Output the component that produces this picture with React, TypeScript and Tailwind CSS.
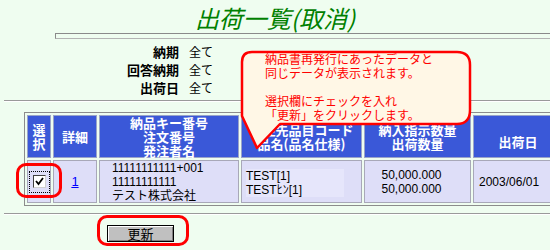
import React from 'react';

const jp = "font-['Noto_Sans_CJK_JP',sans-serif]";
const mixed = "font-['Liberation_Sans','Noto_Sans_CJK_JP',sans-serif]";

// Filtro de cabeçalho (rótulo + valor)
const filters = [
  { label: '納期', value: '全て' },
  { label: '回答納期', value: '全て' },
  { label: '出荷日', value: '全て' },
];

const headCell = `bg-[#3a58d8] border border-[#9aa4c8] text-white font-bold text-[13px] leading-[14px] flex flex-col items-center justify-center text-center ${jp}`;
const dataCell = `bg-[#dedef8] border border-[#a8a8b8] text-black text-[12px] leading-[14px] ${mixed}`;

const Callout = () => (
  <div className="absolute left-0 top-0 w-[550px] h-[250px] pointer-events-none">
    <svg width="550" height="250" viewBox="0 0 550 250" className="absolute left-0 top-0 w-[550px] h-[250px]">
      <path
        d="M252 52 H457 Q470 52 470 65 V110 Q470 124 457 124 H280 L257 148 L242 116 V62 Q242 52 252 52 Z"
        fill="#fff7e6"
        stroke="#ff0000"
        strokeWidth="2.5"
        strokeLinejoin="round"
      />
    </svg>
    <div className={`absolute left-[265px] top-[52px] text-[#ff0000] text-[12px] leading-[14px] ${jp}`}>
      <div>納品書再発行にあったデータと</div>
      <div>同じデータが表示されます。</div>
      <div>&nbsp;</div>
      <div>選択欄にチェックを入れ</div>
      <div>「更新」をクリックします。</div>
    </div>
  </div>
);

export default function App() {
  return (
    <div className="relative w-[550px] h-[250px] overflow-hidden bg-[#effdf0]">
      {/* Título */}
      <div className="h-[33px] pt-[4px] text-center">
        <span className={`text-[24px] leading-[28px] italic text-[#008000] ${jp}`}>出荷一覧(取消)</span>
      </div>
      <div className="ml-[55px] h-[6px] border-t border-l border-b border-t-[#8a8a8a] border-l-[#8a8a8a] border-b-[#b4b4b4]" />

      {/* Filtros */}
      <div className={`mt-[4px] ${jp}`}>
        {filters.map(f => (
          <div key={f.label} className="flex h-[18px] items-center">
            <span className="w-[179px] text-right font-bold text-black text-[13px]">{f.label}</span>
            <span className="ml-[10px] text-black text-[12px]">{f.value}</span>
          </div>
        ))}
      </div>
      <div className="mt-[3px] ml-[4px] h-[2px] border-t border-b border-t-[#9a9a9a] border-b-white" />

      {/* Tabela */}
      <div className="mt-[10px] ml-[24px] w-[560px] grid grid-cols-[24px_44px_140px_121px_107px_90px] grid-rows-[43px_43px] gap-[2px] p-[2px] border border-[#8c8c8c]">
        <div className={headCell}>
          <span>選</span>
          <span>択</span>
        </div>
        <div className={headCell}>詳細</div>
        <div className={headCell}>
          <span>納品キー番号</span>
          <span>注文番号</span>
          <span>発注者名</span>
        </div>
        <div className={`${headCell} text-[12px]`}>
          <span>発注先品目コード</span>
          <span>品名(品名仕様)</span>
        </div>
        <div className={headCell}>
          <span>納入指示数量</span>
          <span>出荷数量</span>
        </div>
        <div className={`${headCell} pt-[10px]`}>出荷日</div>

        <div className={`${dataCell} flex items-center justify-center`}>
          <div className="w-[21px] h-[22px] border border-dotted border-black flex items-center justify-center">
            <span className="w-[13px] h-[13px] bg-white border border-t-[#404040] border-l-[#404040] border-b-[#d0d0d0] border-r-[#d0d0d0] flex items-center justify-center">
              <svg width="9" height="9" viewBox="0 0 9 9">
                <path d="M1 4 L3.5 7 L8 1" fill="none" stroke="#000" strokeWidth="1.8" />
              </svg>
            </span>
          </div>
        </div>
        <div className={`${dataCell} flex items-center justify-center`}>
          <a href="#" className="text-[#0000ff] underline text-[13px]">1</a>
        </div>
        <div className={`${dataCell} pl-[12px] flex flex-col justify-center`}>
          <span>11111111111+001</span>
          <span>11111111111</span>
          <span>テスト株式会社</span>
        </div>
        <div className={`${dataCell} pl-[4px] pt-[3px] flex flex-col justify-center`}>
          <div className="w-[98px] bg-[#e6e6fb] flex flex-col">
            <span>TEST[1]</span>
            <span>TESTﾋﾝ[1]</span>
          </div>
        </div>
        <div className={`${dataCell} pr-[12px] flex flex-col items-center justify-center`}>
          <span>50,000.000</span>
          <span>50,000.000</span>
        </div>
        <div className={`${dataCell} pl-[5px] flex items-center`}>2003/06/01</div>
      </div>

      <div className="mt-[7px] ml-[4px] h-[2px] border-t border-b border-t-[#9a9a9a] border-b-white" />

      {/* Botão */}
      <div className="mt-[10px] ml-[107px] flex">
        <button
          className={`w-[67px] h-[17px] bg-[#c0c0c0] border border-black shadow-[inset_1px_1px_0_#ffffff,inset_-1px_-1px_0_#808080] text-[13px] leading-[13px] text-black flex items-center justify-center ${jp}`}
        >
          更新
        </button>
      </div>

      {/* Destaques vermelhos */}
      <div className="absolute left-[16px] top-[163px] w-[46px] h-[35px] border-[3px] border-[#ff0000] rounded-[10px]" />
      <div className="absolute left-[97px] top-[215px] w-[92px] h-[31px] border-[3px] border-[#ff0000] rounded-[10px]" />

      <Callout />
    </div>
  );
}
